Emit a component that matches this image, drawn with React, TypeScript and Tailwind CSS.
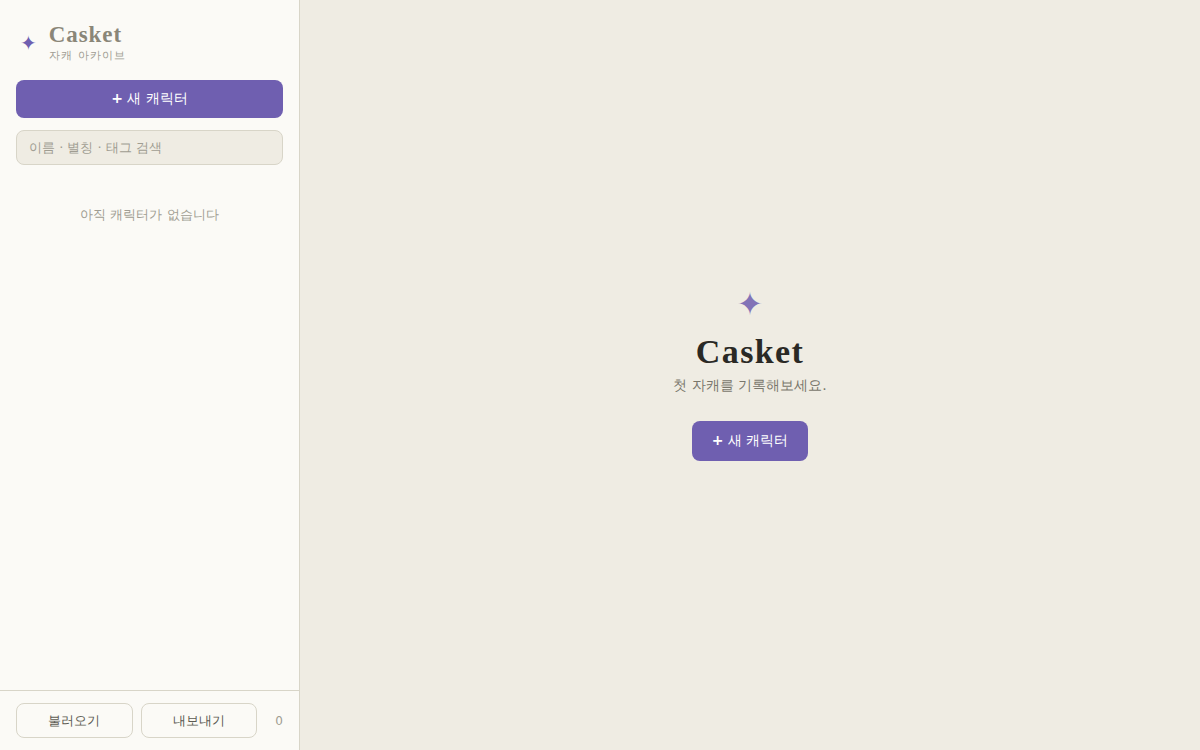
import { useState } from "react";

const sans = "font-['DejaVu_Sans',sans-serif]";
const serif = "font-['Liberation_Serif',serif]";

function NewCharacterButton({ className, onClick }: { className: string; onClick?: () => void }) {
  return (
    <button
      type="button"
      onClick={onClick}
      className={`rounded-lg bg-[#6f5fb0] pb-0.5 text-sm font-medium text-white transition-colors hover:bg-[#5f50a0] ${className}`}
    >
      <span className="font-bold">+</span> 새 캐릭터
    </button>
  );
}

function Sidebar() {
  const [query, setQuery] = useState("");

  return (
    <aside className="flex w-[300px] shrink-0 flex-col border-r border-[#d8d5c8] bg-[#fbfaf6]">
      {/* Brand */}
      <header className="flex items-center gap-3 px-5 pt-[22px] pb-4">
        <span className="text-xl leading-6 text-[#6f5fb0]">✦</span>
        <div>
          <h1 className={`text-[23px] leading-[26px] font-bold tracking-[0.04em] text-[#8a8678] ${serif}`}>Casket</h1>
          <p className="text-[11px] leading-4 tracking-widest text-[#a09d92]">자캐 아카이브</p>
        </div>
      </header>

      <div className="flex flex-col gap-3 px-4">
        <NewCharacterButton className="h-[38px]" />
        <input
          type="search"
          aria-label="캐릭터 검색"
          value={query}
          onChange={e => setQuery(e.target.value)}
          placeholder="이름 · 별칭 · 태그 검색"
          className="h-[35px] w-full rounded-lg border border-[#d8d5c8] bg-[#efece3] px-3 text-[13px] text-[#2a2925] outline-none placeholder:text-[#a09d92] focus:border-[#6f5fb0]"
        />
      </div>

      {/* Character list */}
      <div className="flex-1 px-4 pt-10">
        <p className="text-center text-[13px] leading-5 text-[#a09d92]">아직 캐릭터가 없습니다</p>
      </div>

      <footer className="flex items-center gap-2 border-t border-[#d8d5c8] px-4 py-3 text-[13px]">
        <button type="button" className="h-[35px] flex-1 rounded-lg border border-[#d8d5c8] text-[#5c5a52] hover:bg-[#efece3]">
          불러오기
        </button>
        <button type="button" className="h-[35px] flex-1 rounded-lg border border-[#d8d5c8] text-[#5c5a52] hover:bg-[#efece3]">
          내보내기
        </button>
        <span className="w-[18px] text-right text-xs text-[#a09d92]">0</span>
      </footer>
    </aside>
  );
}

export default function App() {
  return (
    <div lang="ko" className={`flex min-h-screen bg-[#efece3] ${sans}`}>
      <Sidebar />

      <main className="flex flex-1 flex-col items-center justify-center">
        <span className="text-[32px] leading-[30px] text-[#6f5fb0] opacity-85">✦</span>
        <h2 className={`mt-3.5 text-[34px] leading-[38px] font-bold tracking-[0.04em] text-[#2a2925] ${serif}`}>Casket</h2>
        <p className="mt-1 text-sm leading-5 text-[#7a776c]">첫 자캐를 기록해보세요.</p>
        <NewCharacterButton className="mt-[26px] h-10 px-5" />
      </main>
    </div>
  );
}
